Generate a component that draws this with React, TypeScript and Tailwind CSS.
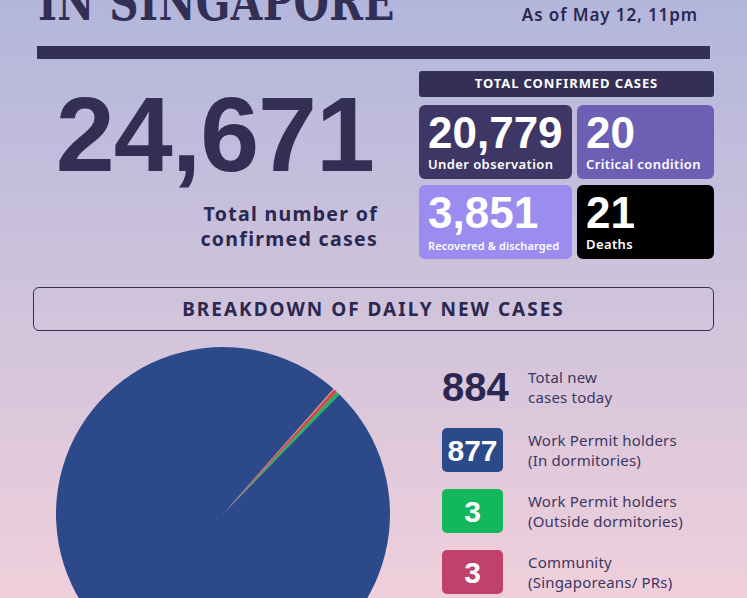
import React from "react"

const slices = [
  { value: 1, color: "#d9a070" },
  { value: 3, color: "#d2454f" },
  { value: 3, color: "#1eb45e" },
  { value: 877, color: "#2c4a8a" },
]

function arc(cx: number, cy: number, r: number, a0: number, a1: number) {
  const p = (a: number) => {
    const t = ((a - 90) * Math.PI) / 180
    return [cx + r * Math.cos(t), cy + r * Math.sin(t)]
  }
  const [x0, y0] = p(a0)
  const [x1, y1] = p(a1)
  const large = a1 - a0 > 180 ? 1 : 0
  return `M${cx},${cy} L${x0},${y0} A${r},${r} 0 ${large} 1 ${x1},${y1} Z`
}

function PieChart() {
  const total = slices.reduce((s, d) => s + d.value, 0)
  let angle = 41.4
  return (
    <svg width="336" height="336" viewBox="0 0 336 336" className="shrink-0">
      {slices.map((s, i) => {
        const a0 = angle
        const a1 = angle + (s.value / total) * 360
        angle = a1
        return <path key={i} d={arc(168, 168, 167, a0, a1)} fill={s.color} />
      })}
    </svg>
  )
}

const sans = { fontFamily: '"Noto Sans", "Open Sans", sans-serif' }
const num = { fontFamily: '"Liberation Sans", Arial, sans-serif' }

function StatCard({ value, label, className, small }: { value: string; label: string; className: string; small?: boolean }) {
  return (
    <div className={`flex h-[74px] flex-col rounded-[6px] px-[9px] pt-[6px] text-white ${className}`}>
      <div className="text-[44px] font-bold leading-[44px]" style={num}>
        {value}
      </div>
      <div
        className={
          small
            ? "mt-[3px] whitespace-nowrap text-[11px] font-semibold leading-[16px] tracking-[0.1px]"
            : "mt-[1px] whitespace-nowrap text-[13px] font-semibold leading-[16px] tracking-[0.4px]"
        }
        style={sans}
      >
        {label}
      </div>
    </div>
  )
}

function LegendRow({ value, color, lines }: { value: string; color: string; lines: [string, string] }) {
  return (
    <div className="flex items-center gap-[25px]">
      <div
        className={`flex h-[44px] w-[61px] items-center justify-center rounded-[5px] text-[30px] font-bold text-white ${color}`}
        style={num}
      >
        {value}
      </div>
      <div className="text-[15px] leading-[20px] tracking-[0.2px] text-[#3a3760]" style={sans}>
        <div>{lines[0]}</div>
        <div>{lines[1]}</div>
      </div>
    </div>
  )
}

export default function App() {
  return (
    <div className="h-[598px] w-[747px] overflow-hidden bg-gradient-to-b from-[#b3b6dc] via-[#cfc3db] to-[#f0cfdb] text-[#2a2850]">
      <div className="flex h-[28px] items-start justify-between pl-[38px] pr-[49px]">
        <h1
          className="-mt-[24px] origin-left scale-x-[0.78] whitespace-nowrap text-[52px] font-bold leading-[52px] tracking-[0.5px] text-[#322e54]"
          style={{ fontFamily: '"DejaVu Serif", "Liberation Serif", serif' }}
        >
          IN SINGAPORE
        </h1>
        <div className="mt-[2px] text-[17px] font-semibold tracking-[0.9px]" style={sans}>
          As of May 12, 11pm
        </div>
      </div>

      <div className="mx-[37px] mt-[18px] h-[13px] bg-[#332f55]" />

      <div className="mt-[12px] flex pl-[37px] pr-[33px]">
        <div className="flex w-[382px] flex-col items-end pr-[32px]">
          <div className="mr-[13px] mt-[10px] text-[106px] font-bold leading-[106px] tracking-[-1px] text-[#322e54]" style={num}>
            24,671
          </div>
          <div
            className="mr-[9px] mt-[14px] text-right text-[19.5px] font-bold leading-[25px] tracking-[1.3px] text-[#2a2850]"
            style={sans}
          >
            <div>Total number of</div>
            <div>confirmed cases</div>
          </div>
        </div>

        <div className="flex flex-1 flex-col">
          <div
            className="flex h-[26px] items-center justify-center rounded-[3px] bg-[#332f55] text-[13px] font-bold tracking-[0.9px] text-white"
            style={sans}
          >
            TOTAL CONFIRMED CASES
          </div>
          <div className="mt-[8px] grid grid-cols-[153px_1fr] gap-x-[5px] gap-y-[6px]">
            <StatCard value="20,779" label="Under observation" className="bg-[#3e3765]" />
            <StatCard value="20" label="Critical condition" className="bg-[#6d5fb4]" />
            <StatCard value="3,851" label="Recovered & discharged" className="bg-[#9b8cf0]" small />
            <StatCard value="21" label="Deaths" className="bg-black" />
          </div>
        </div>
      </div>

      <div className="mx-[33px] mt-[28px] flex h-[44px] items-center justify-center rounded-[6px] border-[1.5px] border-[#332f55]">
        <span className="text-[19px] font-bold tracking-[2px] text-[#2a2850]" style={sans}>
          BREAKDOWN OF DAILY NEW CASES
        </span>
      </div>

      <div className="mt-[15px] flex pl-[55px]">
        <PieChart />
        <div className="ml-[51px] mt-[21px] flex flex-col gap-[17px]">
          <div className="mb-[4px] flex items-center gap-[17px]">
            <div className="w-[69px] text-[40px] font-bold leading-[40px] text-[#2a2850]" style={num}>
              884
            </div>
            <div className="text-[15px] leading-[20px] tracking-[0.2px] text-[#3a3760]" style={sans}>
              <div>Total new</div>
              <div>cases today</div>
            </div>
          </div>
          <LegendRow value="877" color="bg-[#2c4a8a]" lines={["Work Permit holders", "(In dormitories)"]} />
          <LegendRow value="3" color="bg-[#13b85c]" lines={["Work Permit holders", "(Outside dormitories)"]} />
          <LegendRow value="3" color="bg-[#c0426a]" lines={["Community", "(Singaporeans/ PRs)"]} />
        </div>
      </div>
    </div>
  )
}
